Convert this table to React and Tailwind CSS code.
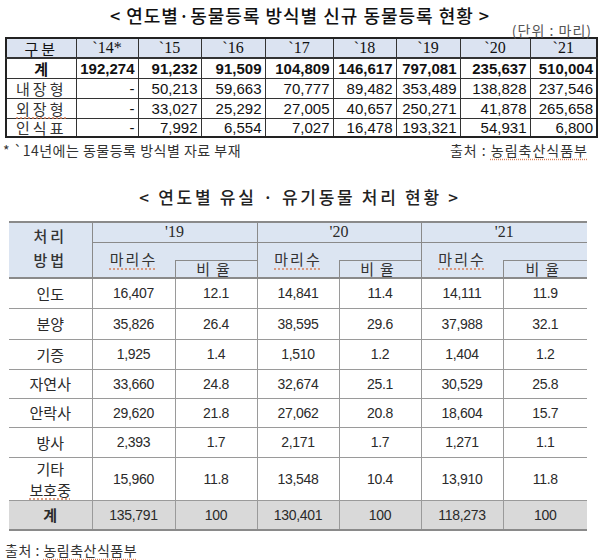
import React from 'react';

const KR = "font-['Noto_Sans_CJK_KR',sans-serif]";
const NUM = "font-['Liberation_Sans','Noto_Sans_CJK_KR',sans-serif]";
const SERIF = "font-['Liberation_Serif','Noto_Sans_CJK_KR',serif]";

// 연도별 동물등록 방식별
const regCols = ['w-[70px]', 'w-[62px]', 'w-[63px]', 'w-[64px]', 'w-[68px]', 'w-[63px]', 'w-[64px]', 'w-[70px]', 'w-[67px]'];
const regYears = ['`14*', '`15', '`16', '`17', '`18', '`19', '`20', '`21'];
const regRows = [
    { label: '계', bold: true, values: ['192,274', '91,232', '91,509', '104,809', '146,617', '797,081', '235,637', '510,004'], h: 'h-[20px]' },
    { label: '내장형', values: ['-', '50,213', '59,663', '70,777', '89,482', '353,489', '138,828', '237,546'], h: 'h-[20px]' },
    { label: '외장형', underline: true, values: ['-', '33,027', '25,292', '27,005', '40,657', '250,271', '41,878', '265,658'], h: 'h-[20px]' },
    { label: '인식표', values: ['-', '7,992', '6,554', '7,027', '16,478', '193,321', '54,931', '6,800'], h: 'h-[19px]' },
];

// 유실·유기동물 처리
const lostCols = ['w-[83px]', 'w-[83px]', 'w-[82px]', 'w-[82px]', 'w-[82px]', 'w-[82px]', 'w-[84px]'];
const lostYears = ["'19", "'20", "'21"];
const lostRows = [
    { label: ['인도'], values: ['16,407', '12.1', '14,841', '11.4', '14,111', '11.9'], h: 'h-[30px]' },
    { label: ['분양'], values: ['35,826', '26.4', '38,595', '29.6', '37,988', '32.1'], h: 'h-[31px]' },
    { label: ['기증'], values: ['1,925', '1.4', '1,510', '1.2', '1,404', '1.2'], h: 'h-[30px]' },
    { label: ['자연사'], values: ['33,660', '24.8', '32,674', '25.1', '30,529', '25.8'], h: 'h-[29px]' },
    { label: ['안락사'], values: ['29,620', '21.8', '27,062', '20.8', '18,604', '15.7'], h: 'h-[29px]' },
    { label: ['방사'], values: ['2,393', '1.7', '2,171', '1.7', '1,271', '1.1'], h: 'h-[30px]' },
    { label: ['기타', '보호중'], values: ['15,960', '11.8', '13,548', '10.4', '13,910', '11.8'], h: 'h-[41px]' },
];
const lostTotal = ['135,791', '100', '130,401', '100', '118,273', '100'];

const spell = 'underline decoration-dotted decoration-[#d9805a] underline-offset-[3px]';

function RegistrationTable() {
    return (
        <table className="ml-[5px] w-[591px] table-fixed border-collapse border-2 border-[#222] text-[#111]">
            <colgroup>
                {regCols.map((c, i) => <col key={i} className={c} />)}
            </colgroup>
            <thead>
                <tr className="h-[20px] bg-[#dbe3f1]">
                    <th className={`${KR} border border-b-2 border-[#333] text-[15px] font-normal leading-none tracking-[3px]`}>구분</th>
                    {regYears.map((y) => (
                        <th key={y} className={`${SERIF} border border-b-2 border-[#333] text-[16px] font-normal leading-none`}>{y}</th>
                    ))}
                </tr>
            </thead>
            <tbody>
                {regRows.map((row) => (
                    <tr key={row.label} className={row.h}>
                        <td className={`${KR} border border-[#333] p-0 text-center text-[15px] leading-none ${row.bold ? 'font-bold' : 'tracking-[3px] text-[#333]'}`}>
                            <span className={row.underline ? spell : ''}>{row.label}</span>
                        </td>
                        {row.values.map((v, i) => (
                            <td key={i} className={`${NUM} border border-[#333] p-0 pr-[3px] text-right text-[15px] leading-none ${row.bold ? 'font-bold' : ''}`}>{v}</td>
                        ))}
                    </tr>
                ))}
            </tbody>
        </table>
    );
}

function LostAnimalTable() {
    return (
        <table className="ml-[9px] w-[578px] table-fixed border-collapse border-y-2 border-[#8a8a8a] text-[#2a2a2a]">
            <colgroup>
                {lostCols.map((c, i) => <col key={i} className={c} />)}
            </colgroup>
            <thead className="bg-[#dce5f2]">
                <tr className="h-[20px]">
                    <th rowSpan={3} className={`${KR} border-r border-b-2 border-[#8a8a8a] p-0 pb-[4px] text-[15px] font-medium leading-[24px] tracking-[3px] text-[#333]`}>
                        처리<br />방법
                    </th>
                    {lostYears.map((y, i) => (
                        <th key={y} colSpan={2} className={`${SERIF} h-[20px] border-b border-[#8a8a8a] p-0 text-[16px] font-normal leading-none ${i < 2 ? 'border-r' : ''}`}>{y}</th>
                    ))}
                </tr>
                <tr className="h-[18px]">
                    {lostYears.map((y, i) => (
                        <React.Fragment key={y}>
                            <th rowSpan={2} className={`${KR} border-b-2 border-[#8a8a8a] p-0 pb-[2px] text-[15px] font-normal leading-none tracking-[2px] text-[#333]`}>
                                <span className={spell}>마리수</span>
                            </th>
                            <th className={`h-[18px] p-0 border-[#8a8a8a] ${i < 2 ? 'border-r' : ''}`}></th>
                        </React.Fragment>
                    ))}
                </tr>
                <tr className="h-[18px]">
                    {lostYears.map((y, i) => (
                        <th key={y} className={`${KR} h-[18px] border-l border-t border-b-2 border-[#8a8a8a] p-0 text-[15px] font-normal leading-none tracking-[6px] text-[#333] ${i < 2 ? 'border-r' : ''}`}>
                            비율
                        </th>
                    ))}
                </tr>
            </thead>
            <tbody>
                {lostRows.map((row) => (
                    <tr key={row.label.join('')} className={row.h}>
                        <td className={`${KR} border-b border-r border-[#9a9a9a] p-0 text-center text-[15px] leading-[21px]`}>
                            {row.label.map((l, i) => (
                                <div key={l} className={i === 1 ? spell : ''}>{l}</div>
                            ))}
                        </td>
                        {row.values.map((v, i) => (
                            <td key={i} className={`${NUM} border-b border-[#9a9a9a] p-0 text-center text-[14px] leading-none tracking-[-0.3px] ${i < 5 ? 'border-r' : ''}`}>{v}</td>
                        ))}
                    </tr>
                ))}
                <tr className="h-[30px] bg-[#d9d9d9]">
                    <td className={`${KR} border-r border-[#9a9a9a] p-0 text-center text-[15px] font-bold leading-none`}>계</td>
                    {lostTotal.map((v, i) => (
                        <td key={i} className={`${NUM} border-[#9a9a9a] p-0 text-center text-[14px] leading-none tracking-[-0.3px] ${i < 5 ? 'border-r' : ''}`}>{v}</td>
                    ))}
                </tr>
            </tbody>
        </table>
    );
}

export default function App() {
    return (
        <div className="h-[560px] w-[600px] overflow-hidden bg-white">
            {/* 동물등록 현황 */}
            <div className={`${KR} mt-[3px] h-[23px] text-center text-[18px] font-medium leading-[24px] tracking-[1px] text-[#111]`}>
                &lt; 연도별·동물등록 방식별 신규 동물등록 현황 &gt;
            </div>
            <div className={`${KR} h-[11px] pr-[8px] text-right text-[14px] leading-[9px] tracking-[1px] text-[#555]`}>
                (단위 : 마리)
            </div>
            <RegistrationTable />
            <div className={`${KR} mt-[3px] flex h-[18px] items-center justify-between pl-[3px] pr-[12px] text-[14px] leading-none tracking-[0.5px] text-[#333]`}>
                <span>* `14년에는 동물등록 방식별 자료 부재</span>
                <span className="tracking-[1px]">출처 : <span className={spell}>농림축산식품부</span></span>
            </div>

            {/* 유실·유기동물 처리 현황 */}
            <div className={`${KR} mt-[26px] h-[24px] text-center text-[17px] font-medium leading-[24px] tracking-[2.7px] text-[#222]`}>
                &lt; 연도별 유실 · 유기동물 처리 현황 &gt;
            </div>
            <div className="h-[12px]" />
            <LostAnimalTable />
            <div className={`${KR} mt-[10px] pl-[5px] text-[14px] leading-[18px] tracking-[0.5px] text-[#333]`}>
                출처 : <span className={spell}>농림축산식품부</span>
            </div>
        </div>
    );
}
